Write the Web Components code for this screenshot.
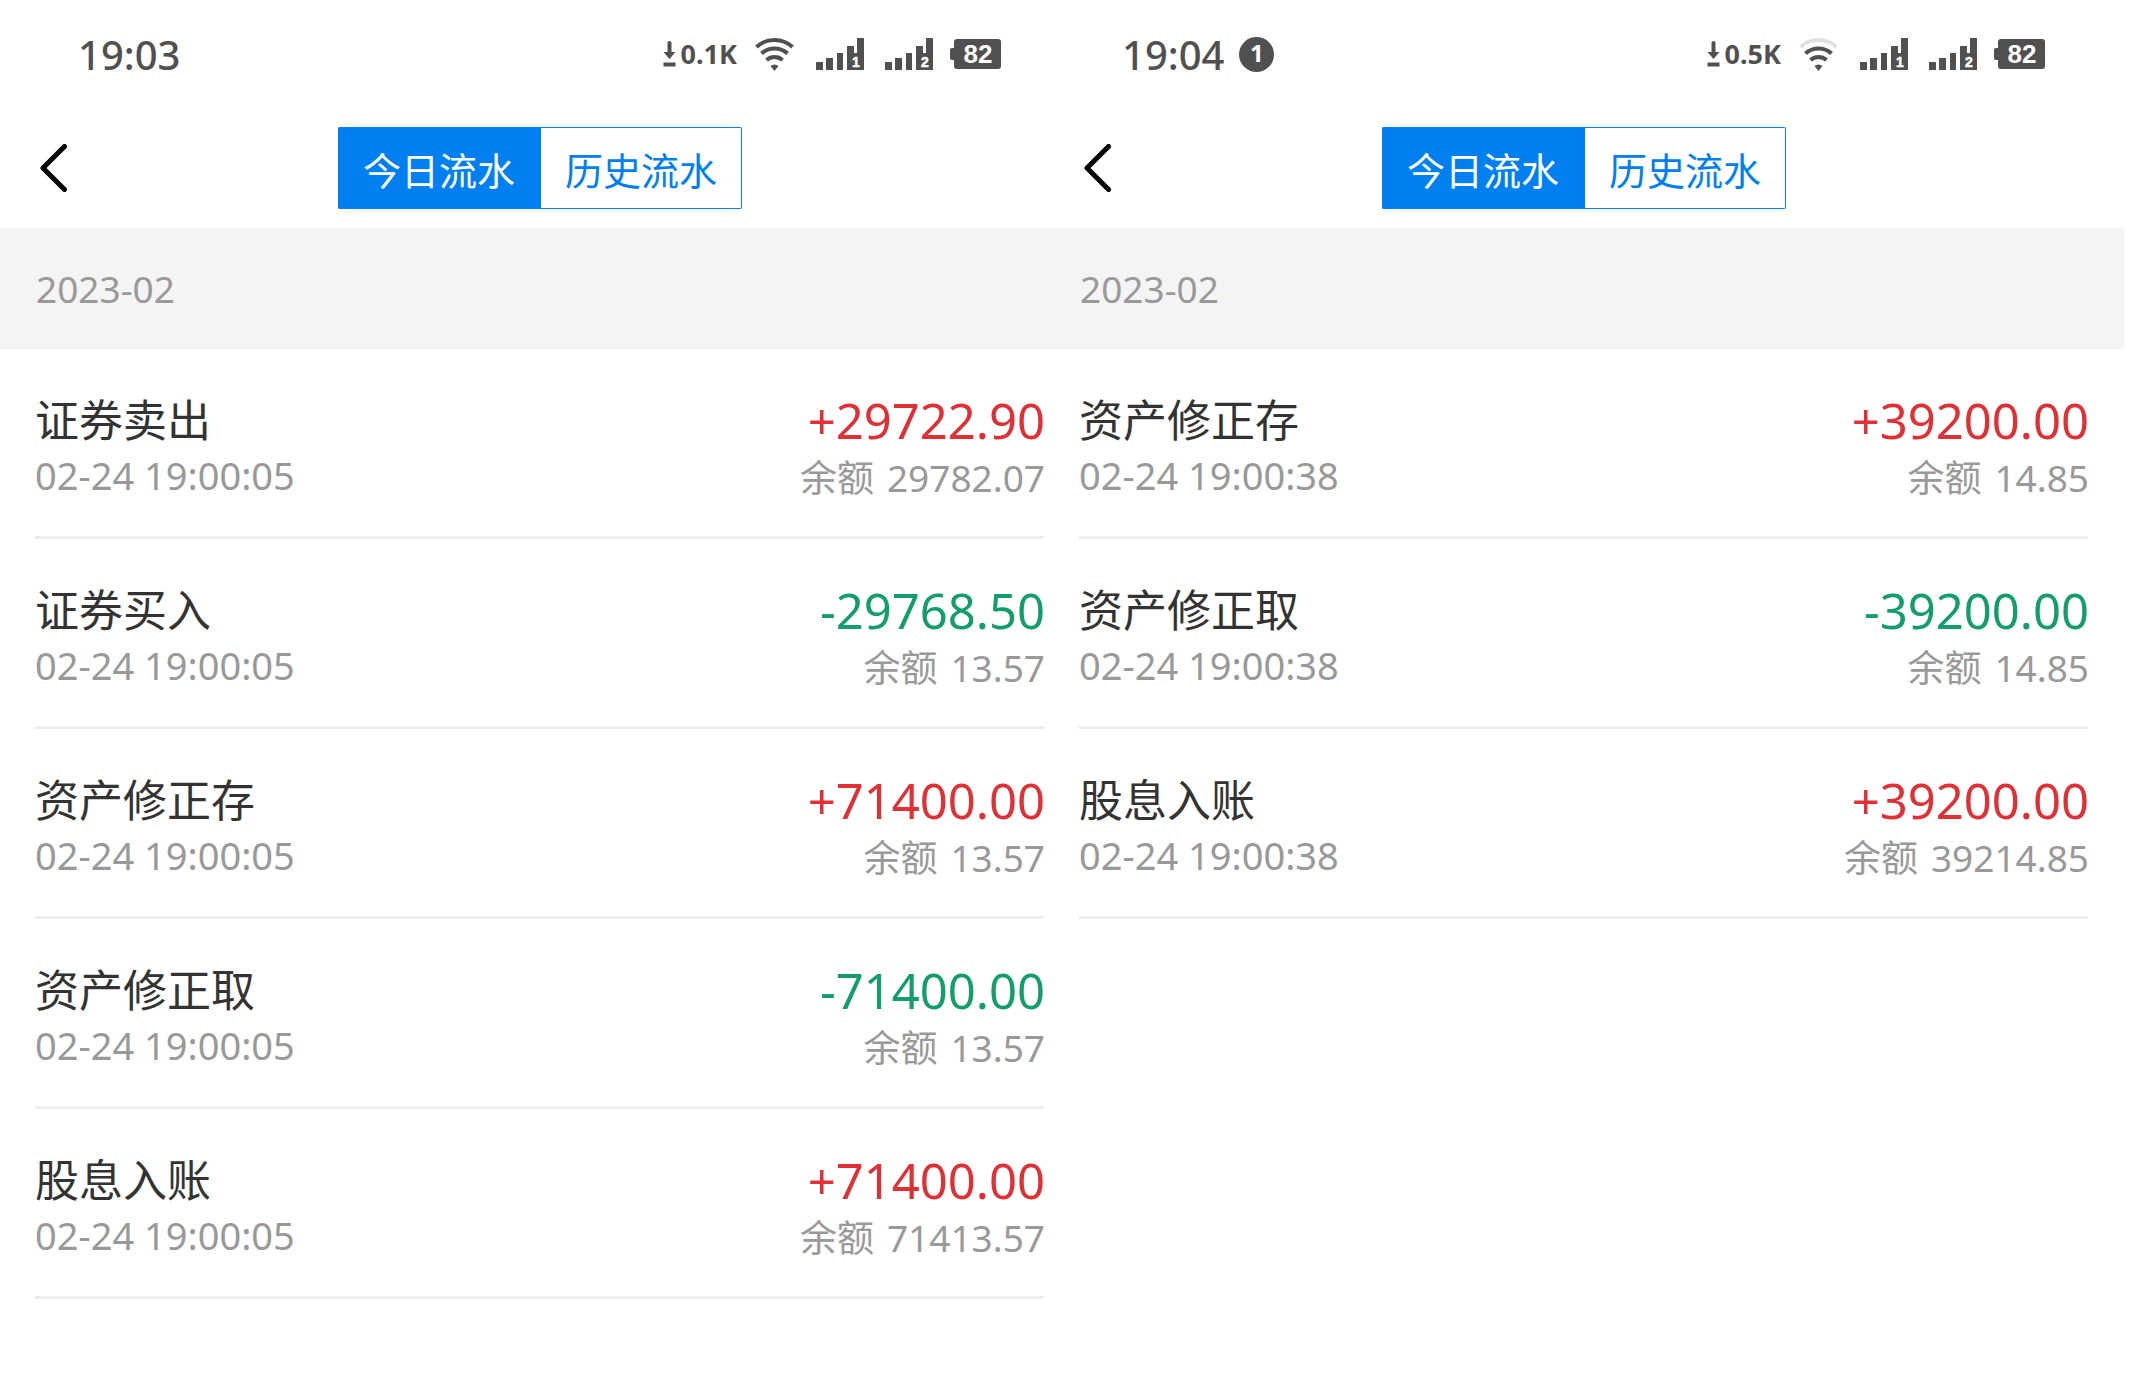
<!DOCTYPE html>
<html lang="zh-CN">
<head>
<meta charset="utf-8">
<title>资金流水</title>
<style>
  body {
    margin: 0;
    background: #fff;
    font-family: "Noto Sans", "Noto Sans CJK SC", sans-serif;
    color: #333;
  }
</style>
</head>
<body>
<screen-pair>
  <phone-screen>
    <status-bar time="19:03" speed="0.1K" battery="82" wifi="4"></status-bar>
    <nav-header></nav-header>
    <month-group month="2023-02">
      <flow-item name="证券卖出" time="02-24 19:00:05" amount="+29722.90" balance="29782.07"></flow-item>
      <flow-item name="证券买入" time="02-24 19:00:05" amount="-29768.50" balance="13.57"></flow-item>
      <flow-item name="资产修正存" time="02-24 19:00:05" amount="+71400.00" balance="13.57"></flow-item>
      <flow-item name="资产修正取" time="02-24 19:00:05" amount="-71400.00" balance="13.57"></flow-item>
      <flow-item name="股息入账" time="02-24 19:00:05" amount="+71400.00" balance="71413.57"></flow-item>
    </month-group>
  </phone-screen>
  <phone-screen>
    <status-bar time="19:04" badge="1" speed="0.5K" battery="82" wifi="3"></status-bar>
    <nav-header></nav-header>
    <month-group month="2023-02">
      <flow-item name="资产修正存" time="02-24 19:00:38" amount="+39200.00" balance="14.85"></flow-item>
      <flow-item name="资产修正取" time="02-24 19:00:38" amount="-39200.00" balance="14.85"></flow-item>
      <flow-item name="股息入账" time="02-24 19:00:38" amount="+39200.00" balance="39214.85"></flow-item>
    </month-group>
  </phone-screen>
</screen-pair>

<script>
  class BaseElement extends HTMLElement {
    connectedCallback() {
      if (this.shadowRoot) return;
      this.attachShadow({ mode: "open" }).innerHTML = this.render();
      this.ready();
    }
    ready() {}
    attr(name) { return this.getAttribute(name) || ""; }
  }

  /* Two screens side by side; the second one covers the first one's right margin. */
  customElements.define("screen-pair", class extends BaseElement {
    render() {
      return `
        <style>
          :host { display: flex; align-items: flex-start; padding-right: 28px; }
          ::slotted(*) { flex: 1 1 0; min-width: 0; }
          ::slotted(:first-child) { margin-right: -36px; }
        </style>
        <slot></slot>`;
    }
  });

  customElements.define("phone-screen", class extends BaseElement {
    render() {
      return `<style>:host { display: flex; flex-direction: column; }</style><slot></slot>`;
    }
  });

  customElements.define("status-bar", class extends BaseElement {
    render() {
      const outer = this.attr("wifi") === "4" ? "#505050" : "#e0e0e0";
      const badge = this.attr("badge");
      const signal = n => `
        <svg class="signal" width="48" height="32" viewBox="0 0 48 32" role="img" aria-label="SIM ${n}">
          <path fill="#505050" d="M0 24h7v8H0zM10 20h7v12h-7zM21 15h6v17h-6zM31 8h7v7h3V0h7v32H31z"/>
          <text x="40" y="29" text-anchor="middle" fill="#fff" stroke="#fff" stroke-width=".5" font-size="14">${n}</text>
        </svg>`;
      return `
        <style>
          :host { display: flex; justify-content: space-between; align-items: center;
                  height: 108px; padding: 0 79px 0 78px; box-sizing: border-box; color: #505050; }
          .side { display: flex; align-items: center; }
          .left { gap: 15px; }
          time { font-size: 40px; font-weight: 500; line-height: 56px; padding-top: 2px; }
          .badge { width: 35px; height: 35px; border-radius: 50%; background: #505050; color: #fff;
                   font-size: 24px; font-weight: 700; line-height: 32px; text-align: center; }
          .speed { display: flex; align-items: center; gap: 5px; font-size: 27px; font-weight: 700; line-height: 36px; margin-right: 18px; }
          .wifi { margin-right: 22px; }
          .signal { margin-right: 21px; }
          .signal + .signal { margin-right: 17px; }
          svg { display: block; }
          svg text { font-family: "Liberation Sans", sans-serif; font-weight: 700; }
        </style>
        <div class="side left">
          <time>${this.attr("time")}</time>
          ${badge ? `<span class="badge">${badge}</span>` : ""}
        </div>
        <div class="side">
          <span class="speed">
            <svg width="13" height="26" viewBox="0 0 13 26" aria-hidden="true">
              <path fill="#505050" d="M4.500 1.500q0-1.500 2-1.500t2 1.500V11h4L6.500 18 .500 11h4zM.500 21.500h12v4H.500z"/>
            </svg>${this.attr("speed")}</span>
          <svg class="wifi" width="39" height="33" viewBox="0 0 39 33" role="img" aria-label="Wi-Fi">
            <g fill="none" stroke="#505050" stroke-width="4">
              <path stroke="${outer}" d="M1.500 9Q9 2 19.500 2T37.500 9"/>
              <path d="M6.500 15.500Q12 10.500 19.500 10.500T32.500 15.500"/>
              <path d="M11.500 22Q15 19 19.500 19T27.500 22"/>
            </g>
            <path fill="#505050" d="M15.500 28q4-3 8 0l-4 5z"/>
          </svg>
          ${signal(1)}${signal(2)}
          <svg width="51" height="30" viewBox="0 0 51 30" role="img" aria-label="Battery">
            <path fill="#505050" d="M7 0h41q3 0 3 3v24q0 3-3 3H7q-3 0-3-3v-6H2q-2 0-2-2v-8q0-2 2-2h2V3q0-3 3-3z"/>
            <text x="28" y="24" text-anchor="middle" fill="#fff" font-size="26">${this.attr("battery")}</text>
          </svg>
        </div>`;
    }
  });

  customElements.define("nav-header", class extends BaseElement {
    render() {
      return `
        <style>
          :host { display: grid; grid-template-columns: 1fr auto 1fr; align-items: center; height: 120px; }
          button { font: inherit; margin: 0; padding: 0; border: 0; background: none; cursor: pointer; }
          .back { justify-self: start; padding: 16px 40px; }
          .back svg { display: block; }
          .tabs { display: grid; grid-template-columns: 1fr 1fr; border-radius: 2px; overflow: hidden; }
          .tabs button { padding: 4px 24px 0; font-size: 38px; line-height: 76px; color: #0080f0;
                         border: 1px solid #0080f0; }
          .tabs button[aria-selected="true"] { background: #0080f0; color: #fff; }
        </style>
        <button class="back" aria-label="返回">
          <svg width="27" height="48" viewBox="0 0 27 48">
            <path d="M24.500 2.500L3 24l21.500 21.500" fill="none" stroke="#000" stroke-width="5" stroke-linecap="round" stroke-linejoin="round"/>
          </svg>
        </button>
        <div class="tabs" role="tablist">
          <button role="tab" aria-selected="true">今日流水</button>
          <button role="tab" aria-selected="false">历史流水</button>
        </div>`;
    }
    ready() {
      const tabs = [...this.shadowRoot.querySelectorAll("[role=tab]")];
      tabs.forEach(tab => tab.addEventListener("click", () =>
        tabs.forEach(t => t.setAttribute("aria-selected", String(t === tab)))));
    }
  });

  customElements.define("month-group", class extends BaseElement {
    render() {
      return `
        <style>
          :host { display: block; }
          h2 { margin: 0; padding: 0 36px; background: #f4f4f4; color: #999;
               font-size: 37px; font-weight: 400; line-height: 121px; }
          .list { padding: 0 36px 0 35px; }
        </style>
        <h2>${this.attr("month")}</h2>
        <div class="list"><slot></slot></div>`;
    }
  });

  customElements.define("flow-item", class extends BaseElement {
    render() {
      const tone = this.attr("amount").startsWith("+") ? "in" : "out";
      return `
        <style>
          :host { display: flex; justify-content: space-between; box-sizing: border-box; height: 190px;
                  padding-top: 43px; border-bottom: 3px solid #eee; white-space: nowrap; }
          .name { font-size: 44px; line-height: 56px; }
          .amount { font-size: 49px; line-height: 56px; }
          .in { color: #e03035; }
          .out { color: #129e6b; }
          .time, .balance { color: #999; }
          .time { font-size: 38px; line-height: 54px; }
          .balance { display: flex; justify-content: flex-end; gap: 13px; font-size: 37px; line-height: 60px; }
          .right { text-align: right; margin-right: -1px; }
        </style>
        <div>
          <div class="name">${this.attr("name")}</div>
          <div class="time">${this.attr("time")}</div>
        </div>
        <div class="right">
          <div class="amount ${tone}">${this.attr("amount")}</div>
          <div class="balance"><span>余额</span><span>${this.attr("balance")}</span></div>
        </div>`;
    }
  });
</script>
</body>
</html>
